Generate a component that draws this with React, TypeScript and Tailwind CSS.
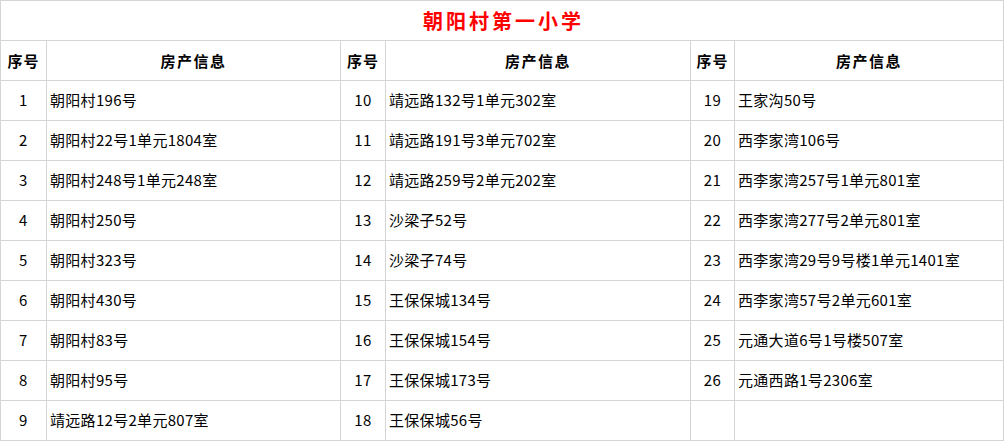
import React from "react";

const colA: [string, string][] = [
  ["1", "朝阳村196号"],
  ["2", "朝阳村22号1单元1804室"],
  ["3", "朝阳村248号1单元248室"],
  ["4", "朝阳村250号"],
  ["5", "朝阳村323号"],
  ["6", "朝阳村430号"],
  ["7", "朝阳村83号"],
  ["8", "朝阳村95号"],
  ["9", "靖远路12号2单元807室"],
];
const colB: [string, string][] = [
  ["10", "靖远路132号1单元302室"],
  ["11", "靖远路191号3单元702室"],
  ["12", "靖远路259号2单元202室"],
  ["13", "沙梁子52号"],
  ["14", "沙梁子74号"],
  ["15", "王保保城134号"],
  ["16", "王保保城154号"],
  ["17", "王保保城173号"],
  ["18", "王保保城56号"],
];
const colC: [string, string][] = [
  ["19", "王家沟50号"],
  ["20", "西李家湾106号"],
  ["21", "西李家湾257号1单元801室"],
  ["22", "西李家湾277号2单元801室"],
  ["23", "西李家湾29号9号楼1单元1401室"],
  ["24", "西李家湾57号2单元601室"],
  ["25", "元通大道6号1号楼507室"],
  ["26", "元通西路1号2306室"],
  ["", ""],
];

const cell = "h-10 border-r border-b border-[#d4d4d4] flex items-center";

export default function App() {
  return (
    <div
      className="w-[1004px] h-[441px] bg-white text-black overflow-hidden"
      style={{ fontFamily: '"Noto Sans CJK SC", "Noto Sans", sans-serif' }}
    >
      <div className="grid grid-cols-[46px_294px_45px_305px_44px_269px] border-l border-t border-[#d4d4d4]">
        <div className={`${cell} col-span-6 justify-center`}>
          <span className="text-[20px] font-bold text-[#ff0000] tracking-[3px] leading-none pl-[3px]">
            朝阳村第一小学
          </span>
        </div>
        {[0, 1, 2].map((i) => (
          <React.Fragment key={`h${i}`}>
            <div className={`${cell} justify-center`}>
              <span className="text-[15px] font-bold tracking-[1px] leading-none">序号</span>
            </div>
            <div className={`${cell} justify-center`}>
              <span className="text-[15px] font-bold tracking-[1.5px] leading-none">房产信息</span>
            </div>
          </React.Fragment>
        ))}
        {colA.map((_, r) => (
          <React.Fragment key={r}>
            {[colA[r], colB[r], colC[r]].map(([n, t], c) => (
              <React.Fragment key={c}>
                <div className={`${cell} justify-center text-[15px] tracking-[0.5px]`}>{n}</div>
                <div className={`${cell} pl-[3px] text-[15px] tracking-[0.3px] whitespace-nowrap`}>{t}</div>
              </React.Fragment>
            ))}
          </React.Fragment>
        ))}
      </div>
    </div>
  );
}
